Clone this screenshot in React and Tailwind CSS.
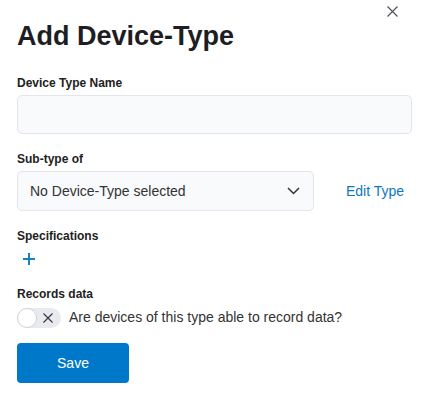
import { useState } from 'react'

export default function App() {
  const [records, setRecords] = useState(false)

  return (
    <div className="relative w-[432px] h-[404px] bg-white font-['Liberation_Sans',Arial,sans-serif] text-[#222]">
      <button className="absolute right-[34px] top-[6px] w-[11px] h-[11px] text-[#4a4d57]">
        <svg viewBox="0 0 11 11" className="w-[11px] h-[11px]" fill="none" stroke="currentColor" strokeWidth="1.1">
          <path d="M0.5 0.5 L10.5 10.5 M10.5 0.5 L0.5 10.5" />
        </svg>
      </button>

      <div className="px-[17px] pt-[20px]">
        <h1 className="text-[27px] leading-[32px] font-bold text-[#1d1e23]">Add Device-Type</h1>

        <label className="block mt-[23px] text-[12px] leading-[16px] font-bold">Device Type Name</label>
        <input
          className="block mt-[4px] w-[395px] h-[39px] rounded-[5px] border border-[#e2e5ee] bg-[#f9fafc] px-3 text-[14px] outline-none"
        />

        <label className="block mt-[17px] text-[12px] leading-[16px] font-bold">Sub-type of</label>
        <div className="mt-[4px] flex items-center">
          <div className="w-[297px] h-[40px] rounded-[5px] border border-[#e2e5ee] bg-[#f9fafc] flex items-center justify-between pl-[12px] pr-[13px]">
            <span className="text-[14px] text-[#333]">No Device-Type selected</span>
            <svg viewBox="0 0 13 8" className="w-[13px] h-[8px]" fill="none" stroke="#333" strokeWidth="1.5">
              <path d="M1 1 L6.5 6.5 L12 1" />
            </svg>
          </div>
          <a href="#" className="ml-[32px] text-[14px] text-[#0a78c2]">Edit Type</a>
        </div>

        <label className="block mt-[17px] text-[12px] leading-[16px] font-bold">Specifications</label>
        <button className="mt-[5px] ml-[5px] w-[13px] h-[20px] flex items-center justify-center text-[#1a7fc8]">
          <svg viewBox="0 0 12 12" className="w-[12px] h-[12px]" fill="none" stroke="currentColor" strokeWidth="2">
            <path d="M6 0 V12 M0 6 H12" />
          </svg>
        </button>

        <label className="block mt-[17px] text-[12px] leading-[16px] font-bold">Records data</label>
        <div className="mt-[5px] flex items-center">
          <button
            onClick={() => setRecords(!records)}
            className="relative w-[44px] h-[20px] rounded-full bg-[#e8eaef] flex items-center"
          >
            <span className="w-[20px] h-[20px] rounded-full bg-white border border-[#cfd3db]" />
            <svg viewBox="0 0 10 10" className="ml-[6px] w-[10px] h-[10px]" fill="none" stroke="#333" strokeWidth="1.1">
              <path d="M0.5 0.5 L9.5 9.5 M9.5 0.5 L0.5 9.5" />
            </svg>
          </button>
          <span className="ml-[8px] text-[14px] text-[#333]">Are devices of this type able to record data?</span>
        </div>

        <button className="mt-[15px] w-[112px] h-[40px] rounded-[4px] bg-[#0078c9] text-white text-[14px]">Save</button>
      </div>
    </div>
  )
}
